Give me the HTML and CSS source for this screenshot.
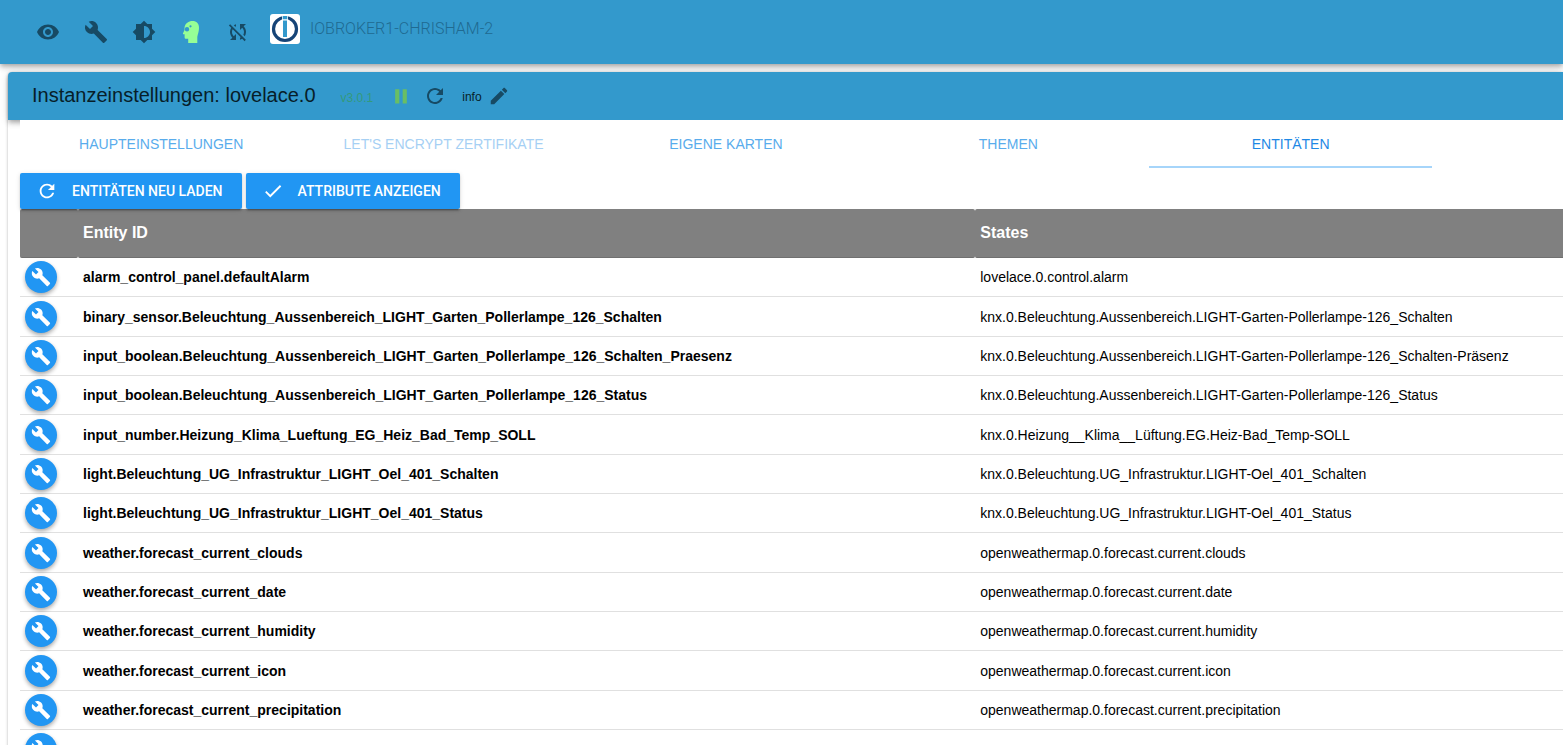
FILE: index.html
```
<!DOCTYPE html>
<html lang="de">
<head>
<meta charset="utf-8">
<title>Instanzeinstellungen: lovelace.0</title>
<link rel="stylesheet" href="styles.css">
</head>
<body>
<svg class="defs" aria-hidden="true">
  <symbol id="wrench" viewBox="0 0 24 24"><path d="M22.7 19l-9.1-9.1c.9-2.3.4-5-1.5-6.9-2-2-5-2.4-7.4-1.3L9 6 6 9 1.6 4.7C.4 7.1.9 10.1 2.9 12.1c1.9 1.9 4.6 2.4 6.9 1.5l9.1 9.1c.4.4 1 .4 1.4 0l2.3-2.3c.5-.4.5-1.1.1-1.4z"/></symbol>
  <symbol id="refresh" viewBox="0 0 24 24"><path d="M17.65 6.35C16.2 4.9 14.21 4 12 4c-4.42 0-7.99 3.58-7.99 8s3.57 8 7.99 8c3.73 0 6.84-2.55 7.73-6h-2.08c-.82 2.33-3.04 4-5.65 4-3.31 0-6-2.69-6-6s2.69-6 6-6c1.66 0 3.14.69 4.22 1.78L13 11h7V4l-2.35 2.35z"/></symbol>
</svg>
<header class="appbar">
  <button class="icon-btn" aria-label="Sichtbarkeit"><svg class="icon" viewBox="0 0 24 24"><path d="M12 4.5C7 4.5 2.73 7.61 1 12c1.73 4.39 6 7.5 11 7.5s9.27-3.11 11-7.5c-1.73-4.39-6-7.5-11-7.5zM12 17c-2.76 0-5-2.24-5-5s2.24-5 5-5 5 2.24 5 5-2.24 5-5 5zm0-8c-1.66 0-3 1.34-3 3s1.34 3 3 3 3-1.34 3-3-1.34-3-3-3z"/></svg></button>
  <button class="icon-btn" aria-label="Systemeinstellungen"><svg class="icon"><use href="#wrench"/></svg></button>
  <button class="icon-btn" aria-label="Farbschema"><svg class="icon" viewBox="0 0 24 24"><path d="M20 15.31L23.31 12 20 8.69V4h-4.69L12 .69 8.69 4H4v4.69L.69 12 4 15.31V20h4.69L12 23.31 15.31 20H20v-4.69zM12 18V6c3.31 0 6 2.69 6 6s-2.69 6-6 6z"/></svg></button>
  <button class="icon-btn expert" aria-label="Expertenmodus"><svg class="icon" viewBox="0 0 24 24"><path fill-rule="evenodd" d="M12.500 1C8.500 1 5.300 3.500 4.600 7L4.500 10 3 13.300c-.3.600.1 1 .7 1H4.600v3c0 1 .5 1.500 1.500 1.500H8.200V23H17.300V17.500C17.500 14.500 19 12.500 19 7.500 19 3.500 16.500 1 12.500 1zM7 7a2.200 2.200 0 1 0 .01 4.400A2.200 2.200 0 0 0 7 7zM10.500 5.200a1.100 1.100 0 1 0 .01 2.200A1.100 1.100 0 0 0 10.500 5.200z"/></svg></button>
  <button class="icon-btn" aria-label="Synchronisierung aus"><svg class="icon" viewBox="2 0 24 24"><path d="M10 6.350V4.260c-.8.210-1.550.540-2.230.960l1.460 1.460c.25-.12.5-.24.77-.33zm-7.140-.94l2.360 2.360C4.450 8.990 4 10.440 4 12c0 2.210.91 4.200 2.360 5.640L4 20h6v-6l-2.240 2.240C6.680 15.150 6 13.660 6 12c0-1 .25-1.940.68-2.770l8.080 8.080c-.25.130-.5.250-.77.340v2.090c.8-.21 1.550-.54 2.230-.96l2.360 2.360 1.270-1.270L4.140 4.140 2.860 5.410zM20 4h-6v6l2.240-2.240C17.320 8.850 18 10.340 18 12c0 1-.25 1.940-.68 2.770l1.460 1.460C19.550 15.010 20 13.560 20 12c0-2.210-.91-4.200-2.360-5.640L20 4z"/></svg></button>
  <div class="host">
    <svg class="logo" viewBox="0 0 30 30"><rect width="30" height="30" rx="3" fill="#fff"/><circle cx="15" cy="15" r="11.500" fill="none" stroke="#164477" stroke-width="3.200"/><path fill="#fff" d="M12 1h6v6h-6z"/><path fill="#3399cc" d="M12.700 2h4.600v3.200h-4.600zM13 6.500h4V23h-4z"/></svg>
    <span class="host-name">IOBROKER1-CHRISHAM-2</span>
  </div>
</header>
<main class="panel">
  <div class="panel-head">
    <h1>Instanzeinstellungen: lovelace.0</h1>
    <span class="version">v3.0.1</span>
    <button class="head-btn pause" aria-label="Anhalten"><svg class="icon-s" viewBox="0 0 24 24"><path d="M5 4h5v17H5zM14 4h5v17h-5z"/></svg></button>
    <button class="head-btn" aria-label="Neu starten"><svg class="icon"><use href="#refresh"/></svg></button>
    <button class="head-btn log"><span>info</span><svg class="icon-m" viewBox="0 0 24 24"><path d="M3 17.250V21h3.750L17.810 9.940l-3.750-3.750L3 17.250zM20.710 7.040c.39-.39.39-1.020 0-1.410l-2.340-2.340c-.39-.39-1.020-.39-1.410 0l-1.830 1.830 3.750 3.750 1.830-1.830z"/></svg></button>
  </div>
  <div class="content">
    <nav class="tabs">
      <a href="#main">HAUPTEINSTELLUNGEN</a>
      <a href="#le" class="disabled">LET'S ENCRYPT ZERTIFIKATE</a>
      <a href="#cards">EIGENE KARTEN</a>
      <a href="#themes">THEMEN</a>
      <a href="#entities" class="active">ENTITÄTEN</a>
    </nav>
    <div class="actions">
      <button class="action"><svg class="icon-m"><use href="#refresh"/></svg>ENTITÄTEN NEU LADEN</button>
      <button class="action"><svg class="icon-m" viewBox="0 0 24 24"><path d="M9 16.170L4.830 12l-1.420 1.410L9 19 21 7l-1.410-1.410z"/></svg>ATTRIBUTE ANZEIGEN</button>
    </div>
    <table class="entities">
      <thead><tr><th class="c-tool"></th><th class="c-id">Entity ID</th><th>States</th></tr></thead>
      <tbody>
        <tr><td><button class="round" aria-label="Bearbeiten"><svg><use href="#wrench"/></svg></button></td><td>alarm_control_panel.defaultAlarm</td><td>lovelace.0.control.alarm</td></tr>
        <tr><td><button class="round" aria-label="Bearbeiten"><svg><use href="#wrench"/></svg></button></td><td>binary_sensor.Beleuchtung_Aussenbereich_LIGHT_Garten_Pollerlampe_126_Schalten</td><td>knx.0.Beleuchtung.Aussenbereich.LIGHT-Garten-Pollerlampe-126_Schalten</td></tr>
        <tr><td><button class="round" aria-label="Bearbeiten"><svg><use href="#wrench"/></svg></button></td><td>input_boolean.Beleuchtung_Aussenbereich_LIGHT_Garten_Pollerlampe_126_Schalten_Praesenz</td><td>knx.0.Beleuchtung.Aussenbereich.LIGHT-Garten-Pollerlampe-126_Schalten-Präsenz</td></tr>
        <tr><td><button class="round" aria-label="Bearbeiten"><svg><use href="#wrench"/></svg></button></td><td>input_boolean.Beleuchtung_Aussenbereich_LIGHT_Garten_Pollerlampe_126_Status</td><td>knx.0.Beleuchtung.Aussenbereich.LIGHT-Garten-Pollerlampe-126_Status</td></tr>
        <tr><td><button class="round" aria-label="Bearbeiten"><svg><use href="#wrench"/></svg></button></td><td>input_number.Heizung_Klima_Lueftung_EG_Heiz_Bad_Temp_SOLL</td><td>knx.0.Heizung__Klima__Lüftung.EG.Heiz-Bad_Temp-SOLL</td></tr>
        <tr><td><button class="round" aria-label="Bearbeiten"><svg><use href="#wrench"/></svg></button></td><td>light.Beleuchtung_UG_Infrastruktur_LIGHT_Oel_401_Schalten</td><td>knx.0.Beleuchtung.UG_Infrastruktur.LIGHT-Oel_401_Schalten</td></tr>
        <tr><td><button class="round" aria-label="Bearbeiten"><svg><use href="#wrench"/></svg></button></td><td>light.Beleuchtung_UG_Infrastruktur_LIGHT_Oel_401_Status</td><td>knx.0.Beleuchtung.UG_Infrastruktur.LIGHT-Oel_401_Status</td></tr>
        <tr><td><button class="round" aria-label="Bearbeiten"><svg><use href="#wrench"/></svg></button></td><td>weather.forecast_current_clouds</td><td>openweathermap.0.forecast.current.clouds</td></tr>
        <tr><td><button class="round" aria-label="Bearbeiten"><svg><use href="#wrench"/></svg></button></td><td>weather.forecast_current_date</td><td>openweathermap.0.forecast.current.date</td></tr>
        <tr><td><button class="round" aria-label="Bearbeiten"><svg><use href="#wrench"/></svg></button></td><td>weather.forecast_current_humidity</td><td>openweathermap.0.forecast.current.humidity</td></tr>
        <tr><td><button class="round" aria-label="Bearbeiten"><svg><use href="#wrench"/></svg></button></td><td>weather.forecast_current_icon</td><td>openweathermap.0.forecast.current.icon</td></tr>
        <tr><td><button class="round" aria-label="Bearbeiten"><svg><use href="#wrench"/></svg></button></td><td>weather.forecast_current_precipitation</td><td>openweathermap.0.forecast.current.precipitation</td></tr>
        <tr><td><button class="round" aria-label="Bearbeiten"><svg><use href="#wrench"/></svg></button></td><td></td><td></td></tr>
      </tbody>
    </table>
  </div>
</main>
</body>
</html>
```

FILE: styles.css
```
* { box-sizing: border-box; }
body {
  margin: 0;
  height: 100vh;
  overflow: hidden;
  background: #fff;
  color: #000;
  font: 14px/20px "Liberation Sans", Arial, sans-serif;
}
button {
  border: 0;
  padding: 0;
  background: none;
  color: inherit;
  font: inherit;
  cursor: pointer;
}
svg { display: block; fill: currentColor; }
.defs { position: absolute; width: 0; height: 0; }
.icon { width: 24px; height: 24px; }
.icon-m { width: 22px; height: 22px; }
.icon-s { width: 20px; height: 20px; }

.appbar {
  display: flex;
  align-items: center;
  height: 64px;
  padding: 0 24px;
  background: #3399cc;
  box-shadow: 0 2px 4px -1px rgba(0,0,0,.2), 0 4px 5px rgba(0,0,0,.14), 0 1px 10px rgba(0,0,0,.12);
}
.icon-btn { padding: 12px; color: #174a64; }
.icon-btn.expert { color: #96fe96; }
.host { display: flex; align-items: center; gap: 10px; padding: 0 6px 6px; }
.logo { width: 30px; height: 30px; }
.host-name { font: 300 16px/20px Roboto, sans-serif; color: #206a91; }

.panel {
  margin: 8px 0 0 8px;
  border-radius: 4px 0 0 0;
  box-shadow: 0 1px 3px rgba(0,0,0,.3);
}
.panel-head {
  display: flex;
  align-items: center;
  height: 48px;
  padding: 0 24px;
  background: #3399cc;
  border-radius: 4px 0 0 0;
  box-shadow: 0 2px 4px -1px rgba(0,0,0,.2), 0 4px 5px rgba(0,0,0,.14), 0 1px 10px rgba(0,0,0,.12);
}
.panel-head h1 { margin: 0 25px 0 0; padding-bottom: 2px; font-size: 20px; line-height: 32px; font-weight: 400; color: #071e29; }
.version { margin-right: 18px; padding-top: 4px; font-size: 12px; color: #339a7c; }
.head-btn { margin-right: 12px; color: #174a64; }
.head-btn.pause { color: #69be64; }
.log { display: flex; align-items: center; gap: 6px; margin-left: 3px; font-size: 12px; }
.log span { padding-top: 2px; color: #071e29; }

.content { position: relative; margin-left: 12px; background: #fff; }
.tabs { display: grid; grid-template-columns: repeat(5, 1fr); width: 91.5%; height: 48px; }
.tabs a {
  display: flex;
  align-items: center;
  justify-content: center;
  padding-top: 2px;
  border-bottom: 2px solid transparent;
  color: #59acec;
  text-decoration: none;
}
.tabs a.disabled { color: #a6d0f4; }
.tabs a.active { color: #1e88e5; border-color: #a6d5fa; }

.actions { display: flex; gap: 4px; padding-top: 5px; }
.action {
  display: flex;
  align-items: center;
  gap: 14px;
  height: 36px;
  padding: 0 19px 0 16px;
  border-radius: 2px;
  background: #2196f3;
  color: #fff;
  font: 500 14px/20px Roboto, sans-serif;
  box-shadow: 0 3px 1px -2px rgba(0,0,0,.2), 0 2px 2px rgba(0,0,0,.14), 0 1px 5px rgba(0,0,0,.12);
}

.entities { width: 100%; table-layout: fixed; border-collapse: separate; border-spacing: 0; }
.entities th {
  height: 49px;
  padding: 0 5px;
  border-bottom: 1px solid #707070;
  border-radius: 2px;
  background: #808080;
  color: #fff;
  font-size: 16px;
  text-align: left;
}
.entities th:last-child { border-radius: 2px 0 0 2px; }
.c-tool { width: 58px; }
.c-id { width: 58.15%; }
.entities td { height: 39px; padding: 0 5px; border-bottom: 1px solid #e0e0e0; white-space: nowrap; }
.entities tr:nth-child(3n+2) td { height: 40px; }
.entities td:nth-child(2) { font-weight: 700; }
.round {
  display: flex;
  align-items: center;
  justify-content: center;
  width: 32px;
  height: 32px;
  border-radius: 50%;
  background: #2196f3;
  color: #fff;
  box-shadow: 0 3px 5px -1px rgba(0,0,0,.2), 0 2px 4px rgba(0,0,0,.2);
}
.round svg { width: 20px; height: 20px; }
```
